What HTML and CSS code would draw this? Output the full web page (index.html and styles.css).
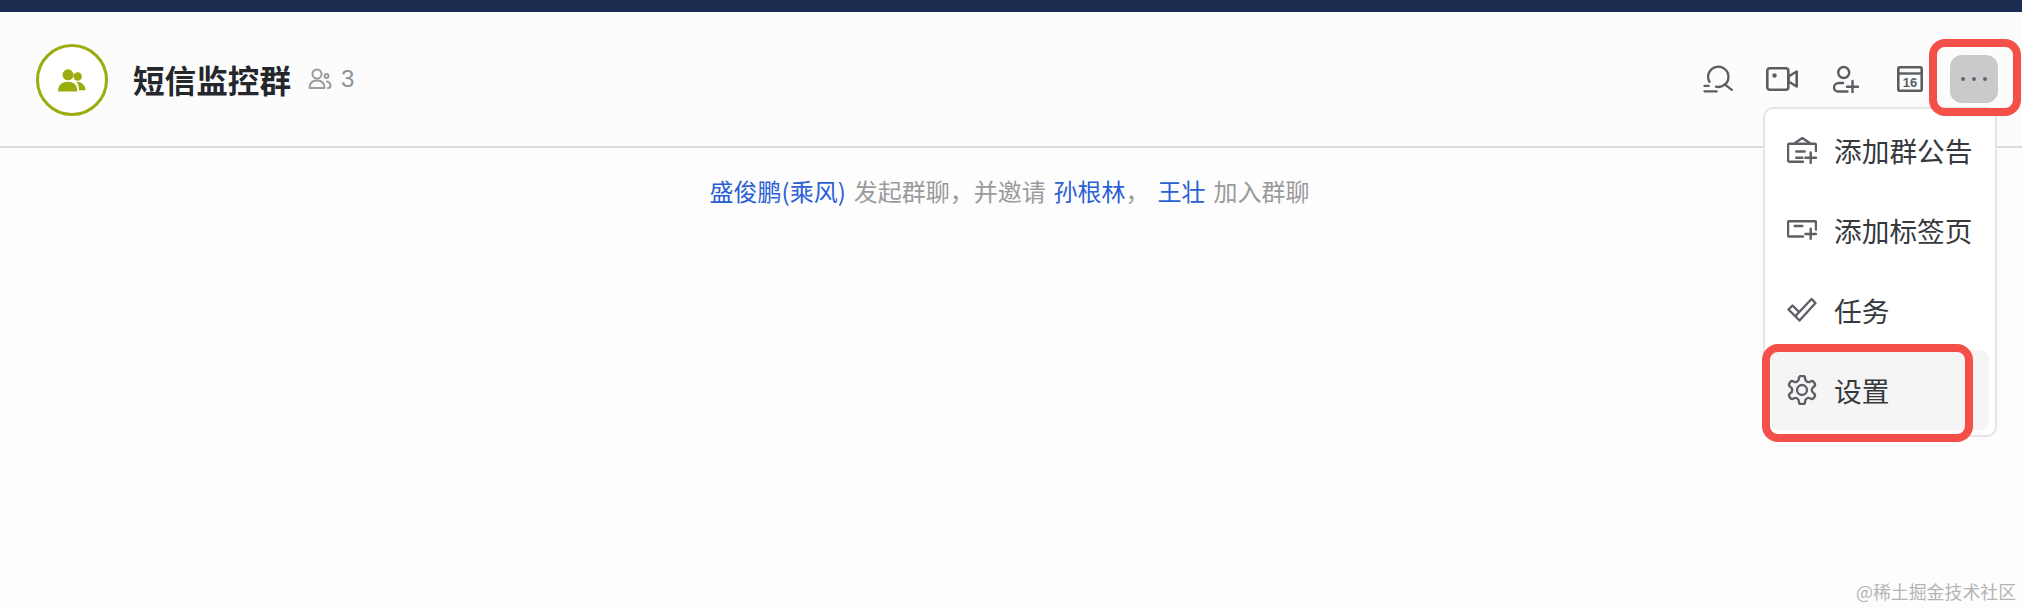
FILE: index.html
```html
<!DOCTYPE html>
<html lang="zh">
<head>
<meta charset="utf-8">
<title>短信监控群</title>
<link rel="stylesheet" href="styles.css">
</head>
<body>
<div class="topbar"></div>
<header class="header">
  <div class="avatar">
    <svg width="28" height="23" viewBox="0 0 32 26"><circle cx="11.500" cy="6.500" r="6.300" fill="#9aad0c"/><path d="M0 25.500c0-7 4-11 11.500-11S22 18.500 22 25.500z" fill="#9aad0c"/><circle cx="22.500" cy="8.500" r="4.800" fill="#9aad0c"/><path d="M21 14.500c6 0 10 3.500 10.500 9.500H24c0-3.500-1-7-3-9.500z" fill="#9aad0c"/></svg>
  </div>
  <h1 class="title">短信监控群</h1>
  <div class="count">
    <svg width="24" height="22" viewBox="0 0 24 22" fill="none" stroke="#9a9da1" stroke-width="2"><circle cx="9" cy="6" r="4.500"/><path d="M1.500 20c0-5 3-7.500 7.500-7.500s7.500 2.500 7.500 7.500z" stroke-linejoin="round"/><circle cx="18.500" cy="8" r="2"/><path d="M19 13.500c2 .5 3.500 2 3.500 4.500 0 1.500-1 2-2.500 2" stroke-linecap="round"/></svg>
    <span>3</span>
  </div>
  <nav class="tools">
    <span class="tool"><svg width="30" height="28" viewBox="0 0 30 29" fill="none" stroke="#5a5e62" stroke-width="2.400" stroke-linecap="round"><path d="M6.200 17.500A10.500 10.500 0 1 1 13 22.500"/><path d="M22 20l7.300 5.700M1 21.700h4.300M1 27.300h12.700"/></svg></span>
    <span class="tool"><svg width="32" height="24" viewBox="0 0 32 24" fill="none" stroke="#5a5e62" stroke-width="2.600" stroke-linejoin="round"><rect x="1.300" y="1.300" width="21" height="21.400" rx="2.500"/><path d="M22.500 9.500l8.200-5v15l-8.200-5z"/><circle cx="8.500" cy="8.500" r="2.200" fill="#5a5e62" stroke="none"/></svg></span>
    <span class="tool"><svg width="26" height="28" viewBox="0 0 26 28" fill="none" stroke="#5a5e62" stroke-width="2.400" stroke-linecap="round"><circle cx="10.700" cy="7.500" r="5.500"/><path d="M10 18H6c-3 0-5 2-5 4.500S3 26.500 5 26.500h9.500"/><path d="M14 21.700h11.500M19.500 16v11.500"/></svg></span>
    <span class="tool"><svg width="26" height="26" viewBox="0 0 26 26" fill="none"><rect x="1.300" y="1.300" width="23.400" height="23.400" rx="1.500" stroke="#5a5e62" stroke-width="2.600"/><path d="M1 7.500h24" stroke="#5a5e62" stroke-width="2.400"/><text x="13" y="20.500" class="cal-num">16</text></svg></span>
    <button class="more"><i></i><i></i><i></i></button>
  </nav>
</header>
<main class="body">
  <p class="sys"><a>盛俊鹏(乘风)</a> 发起群聊，并邀请 <a>孙根林</a>， <a>王壮</a> 加入群聊</p>
</main>
<ul class="menu">
  <li class="item">
    <svg width="30" height="27" viewBox="0 0 30 27" fill="none" stroke="#5c6065" stroke-width="2.400" stroke-linecap="round" stroke-linejoin="round"><path d="M29 14V8.200c0-1-.5-1.500-1.500-1.500h-25C1.500 6.700 1 7.200 1 8.200v15c0 1 .5 1.500 1.500 1.500H16"/><path d="M8 6l7.300-5 7.400 5M9.300 14.500h8.400M9.300 20.700h6M18.400 20.700h10.600M23.700 15.400v10.600"/></svg>
    <span>添加群公告</span>
  </li>
  <li class="item">
    <svg width="30" height="20" viewBox="0 0 30 20" fill="none" stroke="#5c6065" stroke-width="2.400" stroke-linecap="round" stroke-linejoin="round"><path d="M29 9.500V2.500c0-.7-.5-1.200-1.200-1.200H2.200C1.500 1.300 1 1.800 1 2.500v12.800c0 .7.500 1.200 1.200 1.200H16"/><path d="M7.700 6h7.600M18.400 14h10.600M23.700 8.700v10"/></svg>
    <span>添加标签页</span>
  </li>
  <li class="item">
    <svg width="30" height="24" viewBox="0 0 30 24" fill="none" stroke="#5c6065" stroke-width="2.400" stroke-linejoin="round"><path d="M11.500 13.500l-6-6-4 4 11 11L28.500 5l-4-4L8.500 18"/></svg>
    <span>任务</span>
  </li>
  <li class="item active">
    <svg width="30" height="30" viewBox="1.500 1.500 21 21" fill="none" stroke="#5c6065" stroke-width="1.650" stroke-linejoin="round"><path d="M12.220 2h-.44a2 2 0 0 0-2 2v.18a2 2 0 0 1-1 1.730l-.43.25a2 2 0 0 1-2 0l-.15-.08a2 2 0 0 0-2.730.73l-.22.38a2 2 0 0 0 .73 2.730l.15.1a2 2 0 0 1 1 1.720v.51a2 2 0 0 1-1 1.740l-.15.09a2 2 0 0 0-.73 2.730l.22.38a2 2 0 0 0 2.730.73l.15-.08a2 2 0 0 1 2 0l.43.25a2 2 0 0 1 1 1.730V20a2 2 0 0 0 2 2h.44a2 2 0 0 0 2-2v-.18a2 2 0 0 1 1-1.730l.43-.25a2 2 0 0 1 2 0l.15.08a2 2 0 0 0 2.730-.73l.22-.39a2 2 0 0 0-.73-2.730l-.15-.08a2 2 0 0 1-1-1.740v-.5a2 2 0 0 1 1-1.740l.15-.09a2 2 0 0 0 .73-2.730l-.22-.38a2 2 0 0 0-2.730-.73l-.15.08a2 2 0 0 1-2 0l-.43-.25a2 2 0 0 1-1-1.730V4a2 2 0 0 0-2-2z"/><circle cx="12" cy="12" r="3.500"/></svg>
    <span>设置</span>
  </li>
</ul>
<div class="mark mark-more"></div>
<div class="mark mark-set"></div>
<div class="watermark">@稀土掘金技术社区</div>
</body>
</html>
```
FILE: styles.css
```css
* { box-sizing: border-box; }
html, body { margin: 0; height: 100%; }
body {
  position: relative;
  width: 2022px;
  height: 608px;
  overflow: hidden;
  background: #fdfdfe;
  font-family: "Noto Sans CJK SC", "Liberation Sans", sans-serif;
}
.topbar { height: 12px; background: #1c2d52; }
.header {
  height: 136px;
  display: flex;
  align-items: center;
  padding: 0 24px 0 36px;
  border-bottom: 2px solid #dcdcdc;
  background: #fcfcfd;
}
.avatar {
  width: 72px;
  height: 72px;
  margin-top: 2px;
  border-radius: 50%;
  border: 3px solid #9aad0c;
  display: flex;
  align-items: center;
  justify-content: center;
  background: #fff;
}
.title {
  margin: 0 0 0 25px;
  font-size: 31.600px;
  font-weight: 700;
  line-height: 44px;
  color: #24272b;
}
.count {
  margin-left: 17px;
  display: flex;
  align-items: center;
  gap: 9px;
  color: #8f9296;
  font: 24px "Liberation Sans", sans-serif;
}
.tools { margin-left: auto; display: flex; align-items: center; gap: 16px; }
.tool {
  width: 48px;
  height: 48px;
  display: flex;
  align-items: center;
  justify-content: center;
}
.cal-num { font: 700 13px "Liberation Sans", sans-serif; fill: #5a5e62; text-anchor: middle; }
.more {
  width: 48px;
  height: 48px;
  padding: 0;
  border: 0;
  border-radius: 12px;
  background: #c9cacc;
  display: flex;
  align-items: center;
  justify-content: center;
  gap: 7px;
}
.more i { width: 4px; height: 4px; border-radius: 50%; background: #62656a; }
.body { display: flex; justify-content: center; padding: 26px 3px 0 0; }
.sys { margin: 0; font-size: 24px; line-height: 34px; color: #9a9a9a; word-spacing: 2.500px; }
.sys a { color: #2b5fd4; }
.menu {
  position: absolute;
  left: 1763px;
  top: 107px;
  width: 234px;
  height: 330px;
  margin: 0;
  padding: 1px 6px;
  list-style: none;
  background: #fff;
  border: 2px solid #e6e6e7;
  border-radius: 10px;
}
.item {
  height: 80px;
  display: flex;
  align-items: center;
  padding-left: 16px;
  gap: 17px;
  font-size: 27.700px;
  color: #36393d;
  border-radius: 8px;
}
.item svg { flex: none; }
.item.active { background: #f5f5f6; }
.mark {
  position: absolute;
  border: 8px solid #f44f48;
  border-radius: 16px;
}
.mark-more { left: 1929px; top: 39px; width: 92px; height: 77px; }
.mark-set { left: 1762px; top: 344px; width: 211px; height: 98px; }
.watermark {
  position: absolute;
  left: 1856px;
  top: 579px;
  font-size: 17.900px;
  line-height: 24px;
  color: #b4b4b4;
  font-family: "Noto Sans CJK SC", sans-serif;
}
```
